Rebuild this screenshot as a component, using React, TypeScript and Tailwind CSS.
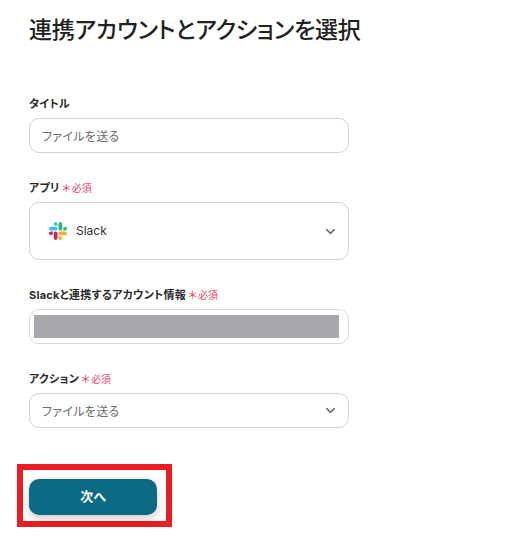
import React from "react";
import { ChevronDown } from "lucide-react";

const font = "font-['Inter','Noto_Sans_CJK_JP','Noto_Sans',sans-serif] [font-feature-settings:'palt']";

const SlackLogo = () => (
  <svg width="18" height="18" viewBox="0 0 122.8 122.8">
    <path fill="#e01e5a" d="M25.8 77.6c0 7.1-5.8 12.9-12.9 12.9S0 84.7 0 77.6s5.8-12.9 12.9-12.9h12.9v12.9zm6.5 0c0-7.1 5.8-12.9 12.9-12.9s12.9 5.8 12.9 12.9v32.3c0 7.1-5.8 12.9-12.9 12.9s-12.9-5.8-12.9-12.9V77.6z" />
    <path fill="#36c5f0" d="M45.2 25.8c-7.1 0-12.9-5.8-12.9-12.9S38.1 0 45.2 0s12.9 5.8 12.9 12.9v12.9H45.2zm0 6.5c7.1 0 12.9 5.8 12.9 12.9s-5.8 12.9-12.9 12.9H12.9C5.8 58.1 0 52.3 0 45.2s5.8-12.9 12.9-12.9h32.3z" />
    <path fill="#2eb67d" d="M97 45.2c0-7.1 5.8-12.9 12.9-12.9s12.9 5.8 12.9 12.9-5.8 12.9-12.9 12.9H97V45.2zm-6.5 0c0 7.1-5.8 12.9-12.9 12.9s-12.9-5.8-12.9-12.9V12.9C64.7 5.8 70.5 0 77.6 0s12.9 5.8 12.9 12.9v32.3z" />
    <path fill="#ecb22e" d="M77.6 97c7.1 0 12.9 5.8 12.9 12.9s-5.8 12.9-12.9 12.9-12.9-5.8-12.9-12.9V97h12.9zm0-6.5c-7.1 0-12.9-5.8-12.9-12.9s5.8-12.9 12.9-12.9h32.3c7.1 0 12.9 5.8 12.9 12.9s-5.8 12.9-12.9 12.9H77.6z" />
  </svg>
);

const Label = ({ text, required }: { text: string; required?: boolean }) => (
  <div className="flex items-center h-[16px] mb-[7px] pt-[2px]">
    <span className="text-[11px] font-bold text-[#2a2a2a] tracking-[0.25px]">{text}</span>
    {required && (
      <span className="flex items-center ml-[2px] text-[#f0476a]">
        <span className="text-[11px] leading-none mr-[1px] mt-[1px] text-[#ee3a5a]">＊</span>
        <span className="text-[10px]">必須</span>
      </span>
    )}
  </div>
);

const Chevron = () => (
  <ChevronDown size={15} strokeWidth={2.5} className="text-[#6b6f75] shrink-0" />
);

export default function App() {
  return (
    <div className={`${font} w-[523px] h-[546px] bg-white overflow-hidden`}>
      <div className="pl-[29px] w-[349px]">
        <h1 className="text-[23px] font-medium text-[#222] leading-[34px] pt-[13px] whitespace-nowrap tracking-[-0.2px]">
          連携アカウントとアクションを選択
        </h1>

        <div className="mt-[48px]">
          <Label text="タイトル" />
          <div className="h-[35px] border border-[#cfd3da] rounded-[10px] flex items-center pt-[2px] px-3 text-[12px] text-[#6b6b6b] tracking-[0.3px]">
            ファイルを送る
          </div>
        </div>

        <div className="mt-[26px]">
          <Label text="アプリ" required />
          <div className="h-[58px] border border-[#cfd3da] rounded-[10px] flex items-center pl-[19px] pr-[10px]">
            <SlackLogo />
            <span className="ml-[9px] text-[12px] text-[#333]">Slack</span>
            <span className="flex-1" />
            <Chevron />
          </div>
        </div>

        <div className="mt-[26px]">
          <Label text="Slackと連携するアカウント情報" required />
          <div className="h-[35px] border border-[#d6d9df] rounded-[10px] flex items-center pl-[4px]">
            <div className="h-[23px] w-[305px] bg-[#a7a8ab]" />
          </div>
        </div>

        <div className="mt-[26px]">
          <Label text="アクション" required />
          <div className="h-[35px] border border-[#cfd3da] rounded-[10px] flex items-center justify-between pl-3 pr-[10px] text-[12px] text-[#6b6b6b] tracking-[0.3px]">
            <span className="pt-[2px]">ファイルを送る</span>
            <Chevron />
          </div>
        </div>
      </div>

      <div className="ml-[17px] mt-[36px] w-[155px] h-[63px] border-[6px] border-[#ea1c24] pl-[6px] pt-[9px]">
        <button className="w-[128px] h-[36px] rounded-[10px] bg-[#0c6a84] text-white text-[13px] font-semibold shadow-[0_3px_8px_rgba(0,0,0,0.22)]">
          次へ
        </button>
      </div>
    </div>
  );
}
